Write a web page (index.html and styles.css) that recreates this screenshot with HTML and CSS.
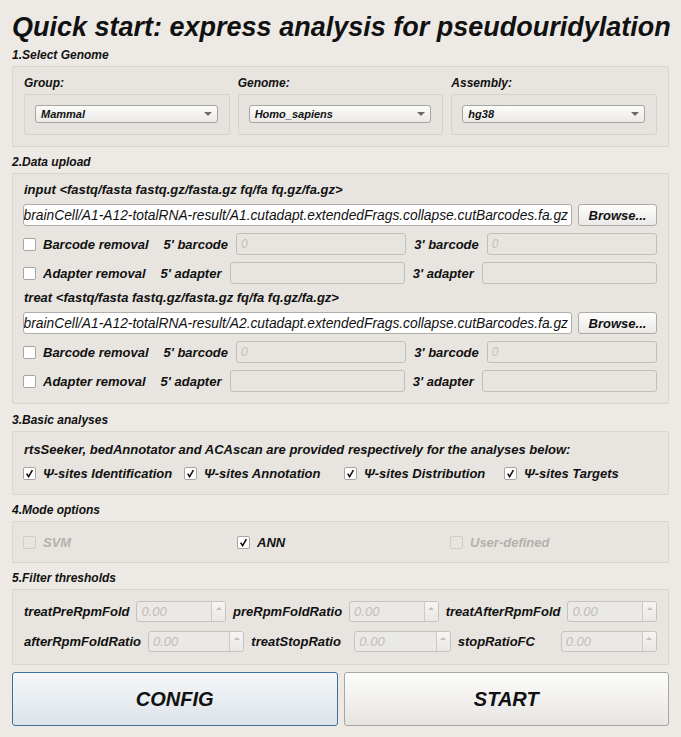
FILE: index.html
```html
<!DOCTYPE html>
<html>
<head>
<meta charset="utf-8">
<title>Quick start</title>
<link rel="stylesheet" href="styles.css">
</head>
<body>
<div class="page">
  <h1 class="title">Quick start: express analysis for pseudouridylation</h1>

  <div class="sec">1.Select Genome</div>
  <div class="box genome">
    <div class="gcol">
      <div class="glabel">Group:</div>
      <div class="frame"><div class="combo"><span>Mammal</span><i class="arrow"></i></div></div>
    </div>
    <div class="gcol">
      <div class="glabel">Genome:</div>
      <div class="frame"><div class="combo"><span>Homo_sapiens</span><i class="arrow"></i></div></div>
    </div>
    <div class="gcol">
      <div class="glabel">Assembly:</div>
      <div class="frame"><div class="combo"><span>hg38</span><i class="arrow"></i></div></div>
    </div>
  </div>

  <div class="sec">2.Data upload</div>
  <div class="box upload">
    <div class="ulabel">input &lt;fastq/fasta fastq.gz/fasta.gz fq/fa fq.gz/fa.gz&gt;</div>
    <div class="filerow">
      <div class="fileinput"><span>brainCell/A1-A12-totalRNA-result/A1.cutadapt.extendedFrags.collapse.cutBarcodes.fa.gz</span></div>
      <div class="browse">Browse...</div>
    </div>
    <div class="optrow">
      <span class="cb"></span><span class="optname">Barcode removal</span>
      <span class="olabel">5' barcode</span><div class="dinput"><span class="ph">0</span></div>
      <span class="olabel">3' barcode</span><div class="dinput"><span class="ph">0</span></div>
    </div>
    <div class="optrow">
      <span class="cb"></span><span class="optname">Adapter removal</span>
      <span class="olabel">5' adapter</span><div class="dinput"></div>
      <span class="olabel">3' adapter</span><div class="dinput"></div>
    </div>
    <div class="ulabel">treat &lt;fastq/fasta fastq.gz/fasta.gz fq/fa fq.gz/fa.gz&gt;</div>
    <div class="filerow">
      <div class="fileinput"><span>brainCell/A1-A12-totalRNA-result/A2.cutadapt.extendedFrags.collapse.cutBarcodes.fa.gz</span></div>
      <div class="browse">Browse...</div>
    </div>
    <div class="optrow">
      <span class="cb"></span><span class="optname">Barcode removal</span>
      <span class="olabel">5' barcode</span><div class="dinput"><span class="ph">0</span></div>
      <span class="olabel">3' barcode</span><div class="dinput"><span class="ph">0</span></div>
    </div>
    <div class="optrow">
      <span class="cb"></span><span class="optname">Adapter removal</span>
      <span class="olabel">5' adapter</span><div class="dinput"></div>
      <span class="olabel">3' adapter</span><div class="dinput"></div>
    </div>
  </div>

  <div class="sec sec-gap">3.Basic analyses</div>
  <div class="box basic">
    <div class="btext">rtsSeeker, bedAnnotator and ACAscan are provided respectively for the analyses below:</div>
    <div class="ckrow">
      <div class="ck"><span class="cb"><svg width="9" height="9" viewBox="0 0 9 9"><path d="M1.6 4.6 L3.6 7.6 L7.4 1.2" fill="none" stroke="#111" stroke-width="1.6"/></svg></span>Ψ-sites Identification</div>
      <div class="ck"><span class="cb"><svg width="9" height="9" viewBox="0 0 9 9"><path d="M1.6 4.6 L3.6 7.6 L7.4 1.2" fill="none" stroke="#111" stroke-width="1.6"/></svg></span>Ψ-sites Annotation</div>
      <div class="ck"><span class="cb"><svg width="9" height="9" viewBox="0 0 9 9"><path d="M1.6 4.6 L3.6 7.6 L7.4 1.2" fill="none" stroke="#111" stroke-width="1.6"/></svg></span>Ψ-sites Distribution</div>
      <div class="ck"><span class="cb"><svg width="9" height="9" viewBox="0 0 9 9"><path d="M1.6 4.6 L3.6 7.6 L7.4 1.2" fill="none" stroke="#111" stroke-width="1.6"/></svg></span>Ψ-sites Targets</div>
    </div>
  </div>

  <div class="sec">4.Mode options</div>
  <div class="box mode">
    <div class="ck disabled"><span class="cb dis"></span>SVM</div>
    <div class="ck"><span class="cb"><svg width="9" height="9" viewBox="0 0 9 9"><path d="M1.6 4.6 L3.6 7.6 L7.4 1.2" fill="none" stroke="#111" stroke-width="1.6"/></svg></span>ANN</div>
    <div class="ck disabled"><span class="cb dis"></span>User-defined</div>
  </div>

  <div class="sec">5.Filter thresholds</div>
  <div class="box filter">
    <div class="frow">
      <span class="flabel">treatPreRpmFold</span>
      <div class="spin"><span class="spin-val">0.00</span><span class="spin-btn"><i class="up"></i></span></div>
      <span class="flabel">preRpmFoldRatio</span>
      <div class="spin"><span class="spin-val">0.00</span><span class="spin-btn"><i class="up"></i></span></div>
      <span class="flabel">treatAfterRpmFold</span>
      <div class="spin"><span class="spin-val">0.00</span><span class="spin-btn"><i class="up"></i></span></div>
    </div>
    <div class="frow">
      <span class="flabel">afterRpmFoldRatio</span>
      <div class="spin"><span class="spin-val">0.00</span><span class="spin-btn"><i class="up"></i></span></div>
      <span class="flabel">treatStopRatio</span>
      <div class="spin"><span class="spin-val">0.00</span><span class="spin-btn"><i class="up"></i></span></div>
      <span class="flabel">stopRatioFC</span>
      <div class="spin"><span class="spin-val">0.00</span><span class="spin-btn"><i class="up"></i></span></div>
    </div>
  </div>

  <div class="actions">
    <div class="bigbtn config">CONFIG</div>
    <div class="bigbtn start">START</div>
  </div>
</div>
</body>
</html>
```

FILE: styles.css
```css
* { box-sizing: border-box; }
html, body { margin: 0; padding: 0; background: #edeae5; }
body {
  font-family: "Liberation Sans", Arial, sans-serif;
  color: #111;
  width: 681px;
  height: 737px;
  overflow: hidden;
}
.page { padding: 11px 12px 0 12px; }

.title {
  margin: 0 0 5px 0;
  font-size: 27px;
  line-height: 32px;
  font-weight: bold;
  font-style: italic;
  white-space: nowrap;
}
.sec {
  font-size: 12px;
  line-height: 14px;
  font-weight: bold;
  font-style: italic;
  margin: 8px 0 4px 0;
}
.title + .sec { margin-top: 0; }
.sec-gap { margin-top: 9px; }

.box {
  background: #e8e5e0;
  border: 1px solid #d8d5d0;
  border-radius: 2px;
}

/* 1. genome */
.genome {
  display: grid;
  grid-template-columns: 1fr 1fr 1fr;
  column-gap: 8px;
  padding: 9px 11px 11px 11px;
}
.glabel {
  font-size: 12px;
  line-height: 14px;
  font-weight: bold;
  font-style: italic;
  margin-bottom: 4px;
}
.frame {
  border: 1px solid #d6d3ce;
  background: #e6e3de;
  border-radius: 2px;
  padding: 10px 11px 11px 10px;
}
.combo {
  height: 18px;
  border: 1px solid #a9a6a1;
  border-radius: 3px;
  background: linear-gradient(#fcfcfb, #ebe9e7);
  display: flex;
  align-items: center;
  padding: 0 5px 0 5px;
  font-size: 11px;
  font-weight: bold;
  font-style: italic;
}
.combo span { flex: 1; }
.arrow {
  width: 0;
  height: 0;
  border-left: 4px solid transparent;
  border-right: 4px solid transparent;
  border-top: 4px solid #6e6c69;
}

/* 2. upload */
.upload {
  display: flex;
  flex-direction: column;
  gap: 7px;
  padding: 9px 11px 11px 10px;
}
.ulabel {
  font-size: 13px;
  line-height: 14px;
  font-weight: bold;
  font-style: italic;
  padding-left: 1px;
  white-space: nowrap;
}
.filerow { display: flex; gap: 6px; height: 22px; }
.fileinput {
  flex: 1;
  min-width: 0;
  background: #fff;
  border: 1px solid #b0ada8;
  border-radius: 3px;
  display: flex;
  justify-content: flex-end;
  align-items: center;
  overflow: hidden;
  padding-right: 3px;
  font-size: 13.8px;
  font-style: italic;
  white-space: nowrap;
}
.fileinput span { flex-shrink: 0; }
.browse {
  width: 79px;
  border: 1px solid #aeaba6;
  border-radius: 3px;
  background: linear-gradient(#fdfdfc, #ebe9e7);
  display: flex;
  align-items: center;
  justify-content: center;
  font-size: 13px;
  font-weight: bold;
  font-style: italic;
}
.optrow { display: flex; align-items: center; gap: 8px; height: 22px; }
.cb {
  width: 13px;
  height: 13px;
  border: 1px solid #a7a4a0;
  background: #fff;
  border-radius: 2px;
  flex-shrink: 0;
  display: flex;
  align-items: center;
  justify-content: center;
}
.cb.dis { background: transparent; border-color: #d0cdc8; }
.optname {
  margin-left: -1px;
  margin-right: 7px;
  font-size: 13px;
  font-weight: bold;
  font-style: italic;
  white-space: nowrap;
}
.olabel {
  font-size: 13px;
  font-weight: bold;
  font-style: italic;
  white-space: nowrap;
}
.dinput {
  flex: 1;
  height: 22px;
  border: 1px solid #c2bfba;
  border-radius: 3px;
  display: flex;
  align-items: center;
  padding-left: 4px;
}
.ph { color: #c3c0bc; font-size: 12px; font-style: italic; }

/* 3. basic */
.basic {
  display: flex;
  flex-direction: column;
  gap: 7px;
  padding: 10px 11px 13px 10px;
}
.btext {
  font-size: 13px;
  line-height: 16px;
  font-weight: bold;
  font-style: italic;
  padding-left: 1px;
  white-space: nowrap;
}
.ckrow {
  display: grid;
  grid-template-columns: 161px 160px 160px 1fr;
  height: 16px;
  align-items: center;
}
.ck {
  display: flex;
  align-items: center;
  gap: 7px;
  font-size: 13px;
  font-weight: bold;
  font-style: italic;
  white-space: nowrap;
}
.ck.disabled { color: #b4b1ad; }

/* 4. mode */
.mode {
  display: grid;
  grid-template-columns: 214px 213px 1fr;
  align-items: center;
  padding: 11px 11px 11px 10px;
}
.mode .ck { height: 18px; }

/* 5. filter */
.filter {
  display: flex;
  flex-direction: column;
  gap: 9px;
  padding: 11px 11px 12px 11px;
}
.frow { display: flex; align-items: center; gap: 7px; height: 21px; }
.flabel {
  min-width: 96px;
  font-size: 13px;
  font-weight: bold;
  font-style: italic;
  white-space: nowrap;
}
.spin {
  flex: 1;
  height: 21px;
  border: 1px solid #c6c3be;
  border-radius: 3px;
  background: #ebe9e5;
  display: flex;
  overflow: hidden;
}
.spin-val {
  flex: 1;
  color: #c0bdb9;
  font-size: 13px;
  font-style: italic;
  padding-left: 4px;
  display: flex;
  align-items: center;
}
.spin-btn {
  width: 14px;
  border-left: 1px solid #cdcac5;
  background: linear-gradient(#f6f5f3, #eae8e5);
  display: flex;
  justify-content: center;
  padding-top: 5px;
}
.up {
  width: 0;
  height: 0;
  border-left: 3px solid transparent;
  border-right: 3px solid transparent;
  border-bottom: 3px solid #c4c1bc;
}

/* buttons */
.actions {
  display: grid;
  grid-template-columns: 1fr 1fr;
  gap: 6px;
  margin-top: 7px;
}
.bigbtn {
  height: 54px;
  border-radius: 3px;
  display: flex;
  align-items: center;
  justify-content: center;
  font-size: 20px;
  font-weight: bold;
  font-style: italic;
}
.config { border: 1px solid #3d6f9d; background: linear-gradient(#f5f7f9, #dce3e9); }
.start { border: 1px solid #aaa7a2; background: linear-gradient(#fcfcfb, #e7e5e2); }
```
